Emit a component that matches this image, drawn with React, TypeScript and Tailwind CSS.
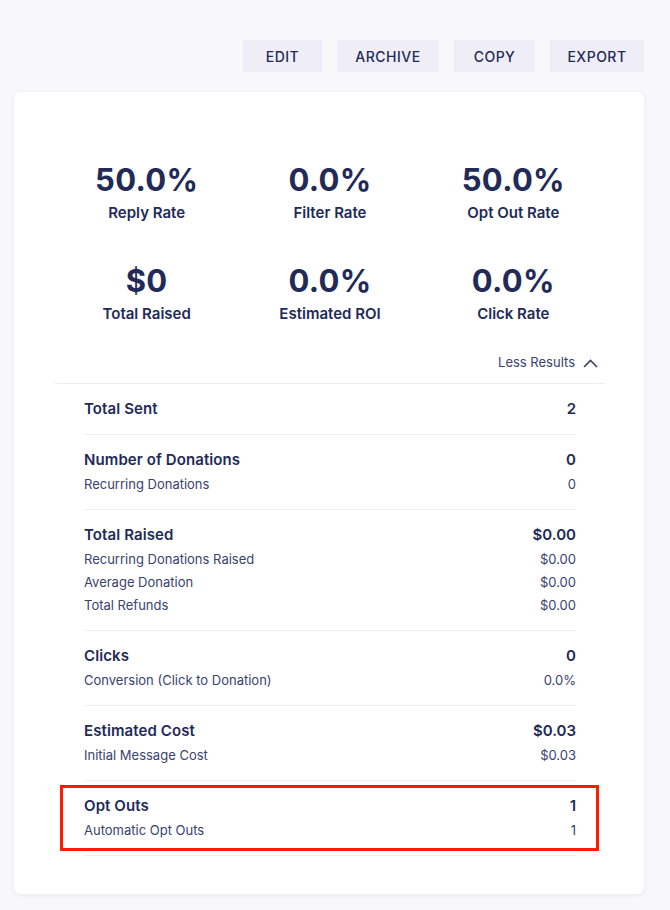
import React from "react";

const navy = "text-[#222a58]";

function Stat({ value, label }: { value: string; label: string }) {
  return (
    <div className="flex flex-col items-center">
      <div className={`text-[31px] leading-[40px] font-bold tracking-[0.3px] ${navy}`}>{value}</div>
      <div className={`mt-[2px] text-[15px] leading-[22px] font-semibold ${navy}`}>{label}</div>
    </div>
  );
}

type Sub = [string, string];

function Section({
  title,
  value,
  subs = [],
  last = false,
  highlight = false,
}: {
  title: string;
  value: string;
  subs?: Sub[];
  last?: boolean;
  highlight?: boolean;
}) {
  return (
    <div className={`relative pt-[13px] pb-[13px] ${last ? "" : "border-b border-[#eeeef4]"}`}>
      <div className="flex justify-between items-center h-[24px]">
        <span className={`text-[15px] font-semibold tracking-[0.1px] ${navy}`}>{title}</span>
        <span className={`text-[15px] font-semibold ${navy}`}>{value}</span>
      </div>
      {subs.length > 0 && (
        <div className="mt-[1px]">
          {subs.map(([l, v]) => (
            <div key={l} className="flex justify-between items-center h-[23px]">
              <span className="text-[13px] text-[#3a4270]">{l}</span>
              <span className="text-[13px] text-[#3a4270]">{v}</span>
            </div>
          ))}
        </div>
      )}
      {highlight && (
        <div className="absolute left-[-24px] right-[-23px] top-[4px] bottom-[4px] border-[3px] border-[#ff1a00] pointer-events-none" />
      )}
    </div>
  );
}

export default function App() {
  return (
    <div
      className="min-h-[910px] bg-[#f8f8fb] pl-[14px] pt-[40px]"
      style={{ fontFamily: "Inter, 'Noto Sans', sans-serif" }}
    >
      <div className="w-[630px]">
        <div className="flex justify-end gap-[15px]">
          {[
            ["EDIT", "w-[79px]"],
            ["ARCHIVE", "w-[102px]"],
            ["COPY", "w-[81px]"],
            ["EXPORT", "w-[94px]"],
          ].map(([t, w]) => (
            <button
              key={t}
              className={`${w} h-[32px] bg-[#efeef7] text-[14px] font-medium tracking-[0.5px] ${navy}`}
            >
              {t}
            </button>
          ))}
        </div>
        <div className="mt-[20px] bg-white rounded-[6px] shadow-[0_1px_4px_rgba(30,30,80,0.08)] pl-[41px] pr-[39px] pt-[68px] pb-[38px]">
          <div className="grid grid-cols-3 gap-y-[37px]">
            <Stat value="50.0%" label="Reply Rate" />
            <Stat value="0.0%" label="Filter Rate" />
            <Stat value="50.0%" label="Opt Out Rate" />
            <Stat value="$0" label="Total Raised" />
            <Stat value="0.0%" label="Estimated ROI" />
            <Stat value="0.0%" label="Click Rate" />
          </div>
          <div className="mt-[28px] flex justify-end items-center gap-[8px] pr-[7px] h-[20px]">
            <span className="text-[13px] text-[#3a4270]">Less Results</span>
            <svg width="15" height="9" viewBox="0 0 15 9" fill="none">
              <path d="M1 8 L7.5 1.5 L14 8" stroke="#3a4270" strokeWidth="1.6" />
            </svg>
          </div>
          <div className="mt-[10px] border-t border-[#eeeef4] px-[29px]">
            <Section title="Total Sent" value="2" />
            <Section title="Number of Donations" value="0" subs={[["Recurring Donations", "0"]]} />
            <Section
              title="Total Raised"
              value="$0.00"
              subs={[
                ["Recurring Donations Raised", "$0.00"],
                ["Average Donation", "$0.00"],
                ["Total Refunds", "$0.00"],
              ]}
            />
            <Section title="Clicks" value="0" subs={[["Conversion (Click to Donation)", "0.0%"]]} />
            <Section title="Estimated Cost" value="$0.03" subs={[["Initial Message Cost", "$0.03"]]} />
            <Section
              title="Opt Outs"
              value="1"
              subs={[["Automatic Opt Outs", "1"]]}
              highlight
            />
          </div>
        </div>
      </div>
    </div>
  );
}
